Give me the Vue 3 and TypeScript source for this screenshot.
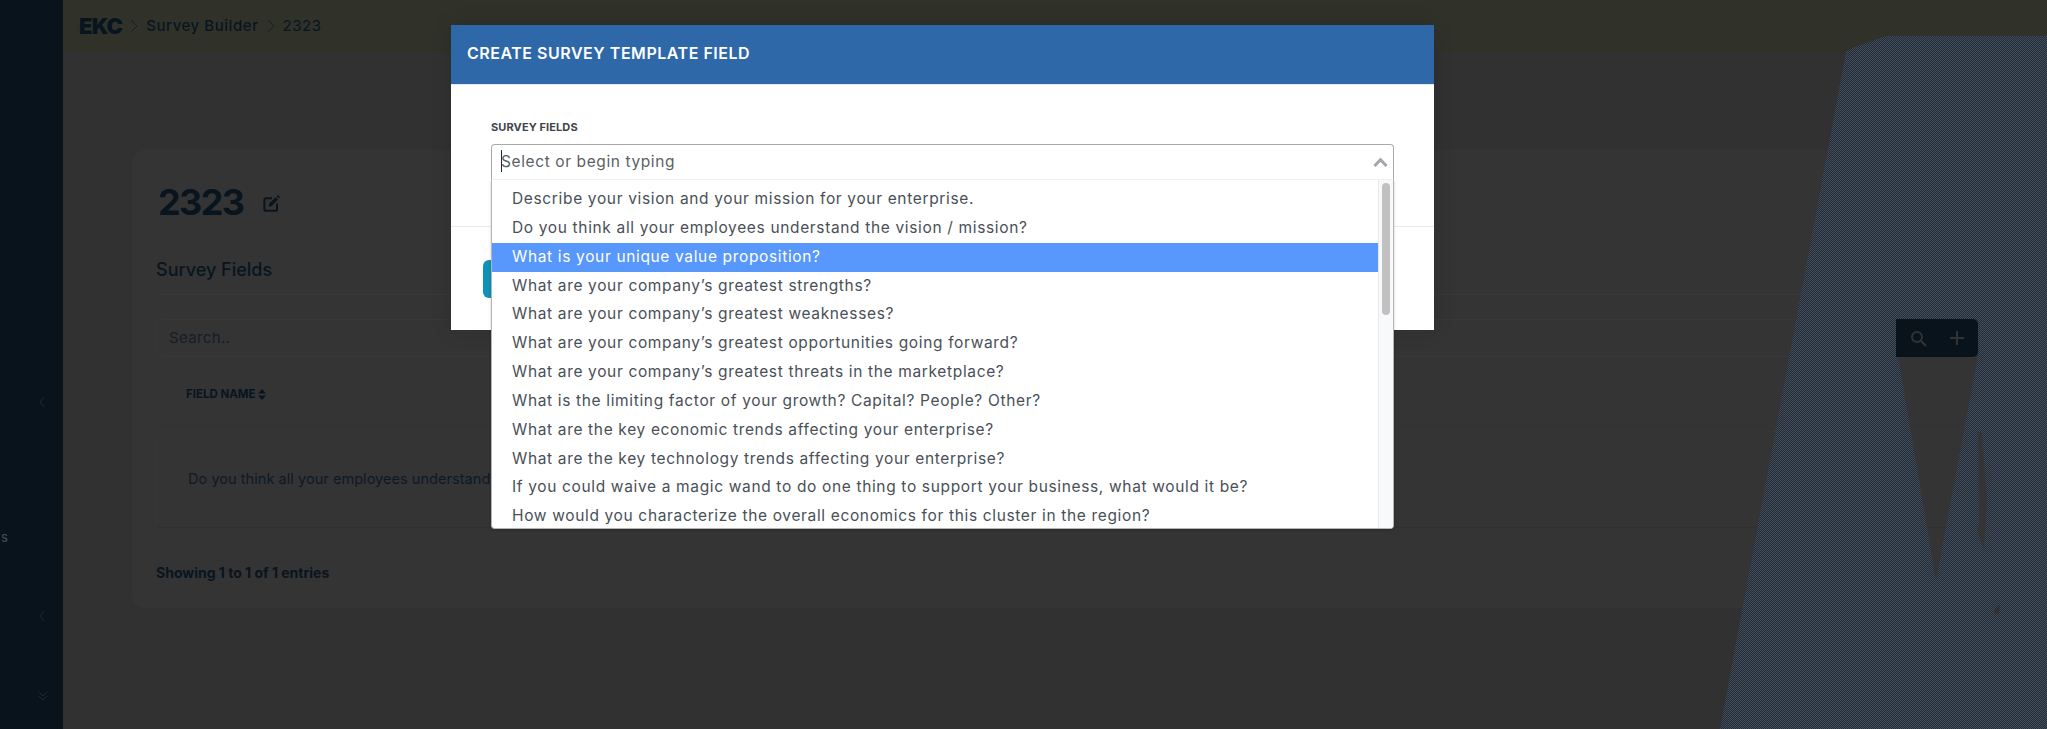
<script setup lang="ts">
const options: string[] = [
  'Describe your vision and your mission for your enterprise.',
  'Do you think all your employees understand the vision / mission?',
  'What is your unique value proposition?',
  'What are your company’s greatest strengths?',
  'What are your company’s greatest weaknesses?',
  'What are your company’s greatest opportunities going forward?',
  'What are your company’s greatest threats in the marketplace?',
  'What is the limiting factor of your growth? Capital? People? Other?',
  'What are the key economic trends affecting your enterprise?',
  'What are the key technology trends affecting your enterprise?',
  'If you could waive a magic wand to do one thing to support your business, what would it be?',
  'How would you characterize the overall economics for this cluster in the region?',
]
</script>

<template>
  <div class="page">
    <aside class="sidebar">
      <span class="side-s">s</span>
      <svg class="side-icon si-1" width="8" height="12" viewBox="0 0 8 12"><path d="M6 1 2 6l4 5" /></svg>
      <svg class="side-icon si-2" width="8" height="12" viewBox="0 0 8 12"><path d="M6 1 2 6l4 5" /></svg>
      <svg class="side-icon si-3" width="10" height="10" viewBox="0 0 10 10"><path d="M1 1l4 4 4-4M1 5l4 4 4-4" /></svg>
    </aside>

    <main class="main">
      <header class="topbar">
        <span class="logo">EKC</span>
        <svg class="crumb-sep" width="8" height="14" viewBox="0 0 8 14"><path d="M1 1l6 6-6 6" /></svg>
        <span class="crumb">Survey Builder</span>
        <svg class="crumb-sep" width="8" height="14" viewBox="0 0 8 14"><path d="M1 1l6 6-6 6" /></svg>
        <span class="crumb crumb-last">2323</span>
      </header>

      <section class="card">
        <div class="title-row">
          <h1 class="title">2323</h1>
          <svg class="edit" width="17" height="17" viewBox="0 0 17 17">
            <path d="M9 3.2H3a1.6 1.6 0 0 0-1.6 1.6v9.4A1.6 1.6 0 0 0 3 15.8h9.4a1.6 1.6 0 0 0 1.6-1.6V8.5" fill="none" stroke="#08151f" stroke-width="2" />
            <path d="M6 8.8 12.6 2.2l2.4 2.4L8.4 11.2 5.6 11.6z" fill="#08151f" />
            <path d="M13.6 1.2 14.8 0 17 2.2l-1.2 1.2z" fill="#08151f" />
          </svg>
        </div>
        <h2 class="subtitle">Survey Fields</h2>

        <div class="search-row">
          <div class="search">Search..</div>
          <div class="search-btns">
            <svg width="17" height="17" viewBox="0 0 17 17" fill="none" stroke="#333" stroke-width="2">
              <circle cx="7" cy="7" r="5" />
              <path d="M10.8 10.8 16 16" />
            </svg>
            <svg width="14" height="14" viewBox="0 0 14 14" fill="none" stroke="#333" stroke-width="2">
              <path d="M7 0v14M0 7h14" />
            </svg>
          </div>
        </div>

        <div class="thead">
          <span>FIELD NAME</span>
          <svg width="8" height="11" viewBox="0 0 8 11"><path d="M4 0l4 4.6H0zM4 11 0 6.4h8z" fill="#08151f" /></svg>
        </div>

        <div class="row">Do you think all your employees understand the vision / mission?</div>

        <p class="entries">Showing 1 to 1 of 1 entries</p>
      </section>
    </main>

    <div class="shape"></div>

    <div class="modal">
      <div class="modal-head">CREATE SURVEY TEMPLATE FIELD</div>
      <div class="modal-body">
        <label class="field-label">SURVEY FIELDS</label>
        <div class="select">
          <span class="caret"></span>
          <span class="placeholder">Select or begin typing</span>
          <svg class="chevron" width="15" height="10" viewBox="0 0 15 10" fill="none" stroke="#a5a5ad" stroke-width="3">
            <path d="M1.5 9 7.5 2.6 13.5 9" />
          </svg>
          <div class="menu">
            <ul class="options">
              <li v-for="(o, i) in options" :key="o" class="option" :class="{ active: i === 2 }">{{ o }}</li>
            </ul>
            <div class="track"><div class="thumb"></div></div>
          </div>
        </div>
      </div>
      <div class="modal-foot">
        <button class="save">Save</button>
      </div>
    </div>
  </div>
</template>

<style>
html, body { margin: 0; background: #313131; }
</style>

<style scoped>
* { box-sizing: border-box; }
.page {
  position: relative;
  width: 2047px;
  height: 729px;
  display: flex;
  overflow: hidden;
  background: #313131;
  font-family: Inter, "Noto Sans", sans-serif;
  color: #08151f;
}
.sidebar {
  position: relative;
  flex: 0 0 63px;
  background: #08131c;
}
.side-s {
  position: absolute;
  left: 1px;
  top: 529px;
  font-size: 13px;
  color: #4a4f55;
}
.side-icon { position: absolute; fill: none; stroke: #1e2a34; stroke-width: 1; }
.si-1 { left: 38px; top: 396px; }
.si-2 { left: 38px; top: 610px; }
.si-3 { left: 38px; top: 691px; }
.main { flex: 1; display: flex; flex-direction: column; min-width: 0; }
.topbar {
  flex: 0 0 52px;
  display: flex;
  align-items: center;
  padding-left: 16px;
  background: #30322a;
  padding-bottom: 1px;
}
.logo {
  font-weight: 900;
  font-size: 22px;
  letter-spacing: -0.8px;
  color: #08151f;
  margin-right: 7px;
}
.crumb-sep { fill: none; stroke: #141f26; stroke-width: 1; margin: 0 8px 0 1px; }
.crumb { font-size: 15px; font-weight: 500; letter-spacing: 0.55px; margin-right: 7px; color: #08151f; }
.crumb-last { font-weight: 400; }
.card {
  margin: 98px 45px 0 69px;
  height: 458px;
  background: #343434;
  border-radius: 12px;
  padding: 24px 24px 0;
}
.title-row { display: flex; align-items: center; height: 56px; padding-left: 2px; }
.title { margin: 0; font-size: 36px; font-weight: 700; letter-spacing: -1.6px; color: #08151f; }
.edit { margin-left: 20px; margin-top: 3px; }
.subtitle {
  margin: 26px 0 0;
  height: 39px;
  font-size: 18px;
  font-weight: 500;
  line-height: 28px;
  color: #08151f;
  border-bottom: 1px solid #383838;
}
.search-row { display: flex; margin-top: 24px; height: 38px; }
.search {
  flex: 1;
  border: 1px solid #383838;
  border-radius: 6px 0 0 6px;
  padding-left: 12px;
  line-height: 36px;
  font-size: 15px;
  color: #121e28;
  letter-spacing: 0.35px;
}
.search-btns {
  position: relative;
  z-index: 2;
  flex: 0 0 82px;
  display: flex;
  align-items: center;
  justify-content: space-between;
  padding: 0 14px;
  background: #08131c;
  border-radius: 0 5px 5px 0;
}
.thead {
  display: flex;
  align-items: center;
  gap: 2px;
  height: 74px;
  padding-left: 30px;
  font-size: 11.5px;
  font-weight: 700;
  color: #08151f;
}
.row {
  height: 97px;
  padding-left: 31px;
  line-height: 94px;
  font-size: 14.5px;
  letter-spacing: 0.05px;
  color: #0c1a26;
  border: 1px solid #363636;
  border-bottom-color: #30312c;
  border-radius: 4px;
  white-space: nowrap;
}
.entries { margin: 35px 0 0; font-size: 14px; font-weight: 700; color: #08151f; line-height: 20px; }
.shape {
  position: absolute;
  left: 0;
  top: 0;
  width: 2047px;
  height: 729px;
  z-index: 1;
  pointer-events: none;
  background: conic-gradient(#232b36 25%, #424d5c 0 50%, #232b36 0 75%, #424d5c 0) 0 0 / 2px 2px;
  clip-path: path(evenodd, "M1846 52 1852 48 1872 41 1886 36 2047 36V729H1720Z M1897 350H1979L1936 581Z M1978 432 1982 432 1987 500 1984 551 1977 530 1979 525Z M1994 610 2000 604 1999 613 1995 614Z");
}
.modal {
  position: absolute;
  z-index: 5;
  left: 451px;
  top: 25px;
  width: 983px;
  height: 305px;
  background: #fff;
  box-shadow: 0 0 20px rgba(0, 0, 0, 0.12);
}
.modal-head {
  height: 59px;
  padding-left: 16px;
  line-height: 57px;
  background: #2e68a8;
  color: #fff;
  font-size: 16px;
  font-weight: 600;
  letter-spacing: 0.52px;
}
.modal-body {
  height: 143px;
  padding: 35px 0 0 40px;
  border-top: 1px solid #e6e9ec;
  border-bottom: 1px solid #e9ecef;
}
.field-label {
  display: block;
  height: 24px;
  font-size: 11px;
  font-weight: 700;
  line-height: 14px;
  color: #3f444c;
  letter-spacing: 0.1px;
}
.select {
  position: relative;
  width: 903px;
  height: 36px;
  display: flex;
  align-items: center;
  padding-left: 9px;
  padding-bottom: 2px;
  background: #fff;
  border: 1px solid #aaa;
  border-bottom: 1px dotted #eceef0;
  border-radius: 4px 4px 0 0;
}
.caret { width: 1px; height: 22px; background: #1f2730; }
.placeholder { margin-left: -1px; font-size: 15.5px; letter-spacing: 0.6px; color: #5a5f66; }
.chevron { position: absolute; right: 5px; top: 12px; }
.menu {
  position: absolute;
  left: -1px;
  right: -1px;
  top: 35px;
  height: 349px;
  display: flex;
  overflow: hidden;
  background: #fff;
  border: 1px solid #b5b5b5;
  border-top: 0;
  border-radius: 0 0 4px 4px;
  box-shadow: 0 1px 3px rgba(0, 0, 0, 0.2);
}
.options { flex: 1; margin: 0; padding: 5px 0 0; list-style: none; min-width: 0; }
.option {
  height: 28.85px;
  padding-left: 20px;
  line-height: 28px;
  font-size: 15.5px;
  letter-spacing: 0.65px;
  color: #495057;
  white-space: nowrap;
}
.active { background: #5897fb; color: #fff; }
.track {
  flex: 0 0 15px;
  padding: 3px 3px 0 3px;
  background: #f8f9fa;
  border-left: 1px solid #e9e9e9;
}
.thumb { width: 8px; height: 132px; border-radius: 4px; background: #c1c1c1; }
.modal-foot { padding: 33px 0 0 32px; }
.save {
  width: 90px;
  height: 38px;
  border: 0;
  border-radius: 6px;
  background: #0d93b8;
  color: #fff;
  font: inherit;
  font-size: 14px;
}
</style>
